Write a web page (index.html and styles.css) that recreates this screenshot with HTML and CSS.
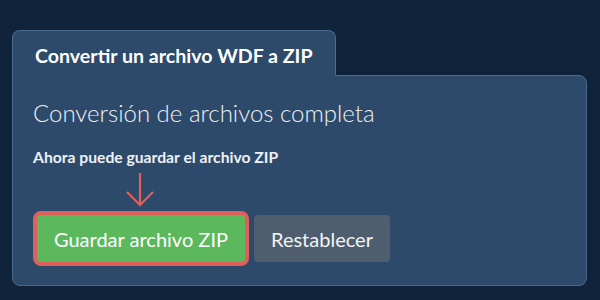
FILE: index.html
```html
<!DOCTYPE html>
<html lang="es">
<head>
  <meta charset="UTF-8" />
  <meta name="viewport" content="width=device-width, initial-scale=1.0" />
  <title>Convertir WDF a ZIP</title>
  <link rel="stylesheet" href="styles.css">
</head>
<body>
  <div class="converter">
    <div class="tab">Convertir un archivo WDF a ZIP</div>
    <div class="panel">
      <h2>Conversión de archivos completa</h2>
      <p class="note">Ahora puede guardar el archivo ZIP</p>
      <div class="actions">
        <div class="save-wrap">
          <svg class="arrow" width="30" height="36" viewBox="0 0 30 36">
            <path d="M15 1 V33 M2 20 L15 33 L28 20" fill="none" stroke="#e0605a" stroke-width="2.2" />
          </svg>
          <button class="btn btn-save">Guardar archivo ZIP</button>
        </div>
        <button class="btn btn-reset">Restablecer</button>
      </div>
    </div>
  </div>
</body>
</html>
```

FILE: styles.css
```css
body {
  margin: 0;
  padding: 30px 13px 14px 12px;
  background: #10233a;
  font-family: Lato, "Open Sans", sans-serif;
  color: #fff;
}

.tab {
  display: inline-block;
  position: relative;
  z-index: 1;
  padding: 13px 22px 8px 22px;
  line-height: 24px;
  font-size: 19.6px;
  font-weight: bold;
  background: #2d4a6b;
  border: 1px solid #4b6a8f;
  border-bottom: none;
  border-radius: 8px 8px 0 0;
  margin-bottom: -1px;
}

.panel {
  background: #2d4a6b;
  border: 1px solid #4b6a8f;
  border-radius: 0 8px 8px 8px;
  padding: 22px 20px 23px 20px;
}

.panel h2 {
  margin: 0;
  font-size: 24px;
  font-weight: 300;
  line-height: 29px;
  color: #eef1f5;
}

.note {
  margin: 21px 0 0 0;
  font-size: 15.7px;
  font-weight: bold;
  line-height: 19px;
  color: #eef1f5;
}

.actions {
  display: flex;
  align-items: center;
  gap: 9px;
  margin-top: 48px;
  padding-left: 4px;
}

.save-wrap {
  position: relative;
}

.arrow {
  position: absolute;
  left: 88px;
  top: -43px;
}

.btn {
  font-family: Lato, "Open Sans", sans-serif;
  font-size: 20px;
  height: 47px;
  padding: 0 17px;
  border: none;
  border-radius: 4px;
  color: #fff;
}

.btn-save {
  background: #5cb85c;
  box-shadow: 0 0 0 4px #df5f5b;
}

.btn-reset {
  background: #4f5e6e;
  color: #f2f4f6;
}
```
